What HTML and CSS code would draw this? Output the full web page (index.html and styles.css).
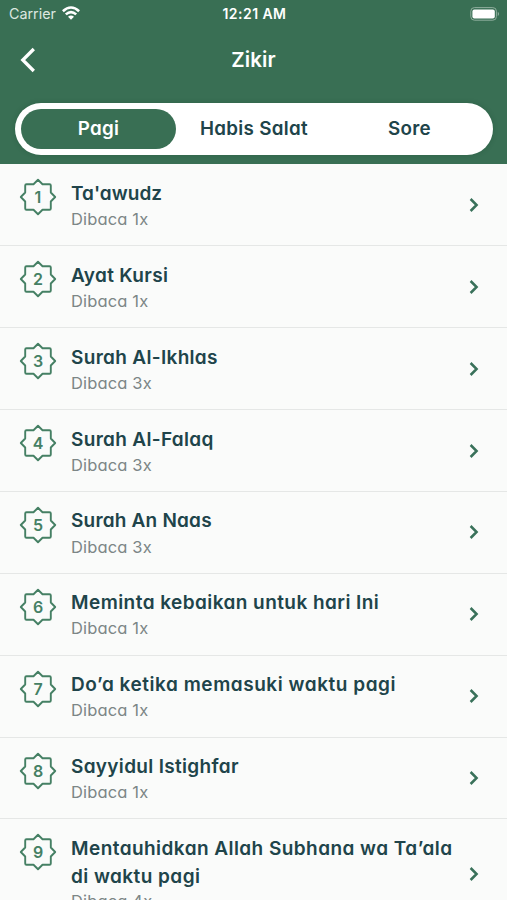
FILE: index.html
```html
<!DOCTYPE html>
<html lang="id">
<head>
<meta charset="utf-8">
<meta name="viewport" content="width=device-width">
<title>Zikir</title>
<link rel="stylesheet" href="styles.css">
</head>
<body>
<svg width="0" height="0" class="defs">
  <symbol id="star" viewBox="0 0 38 38"><path d="M19 1.8 L23.5 6.2 H30.5 Q31.8 6.2 31.8 7.5 V14.5 L36.2 19 L31.8 23.5 V30.5 Q31.8 31.8 30.5 31.8 H23.5 L19 36.2 L14.5 31.8 H7.5 Q6.2 31.8 6.2 30.5 V23.5 L1.8 19 L6.2 14.5 V7.5 Q6.2 6.2 7.5 6.2 H14.5 Z" fill="none" stroke="#458064" stroke-width="1.9" stroke-linejoin="round"/></symbol>
  <symbol id="chevron" viewBox="0 0 10 16"><path d="M1.6 2 L7.6 8 L1.6 14" fill="none" stroke="#39715a" stroke-width="2.5"/></symbol>
</svg>
<header class="header">
  <div class="status">
    <div class="carrier"><span>Carrier</span>
      <svg class="wifi" width="18" height="14" viewBox="0 0 18 14" fill="none" stroke="#fff" stroke-width="2.6"><path d="M.9 5.2 Q9 -2.2 17.1 5.2"/><path d="M3.8 8.4 Q9 3.8 14.2 8.4"/><path d="M9 13.8 L6 10.7 Q9 8.3 12 10.7 Z" fill="#fff" stroke="none"/></svg>
    </div>
    <span class="time">12:21 AM</span>
    <svg class="battery" width="30" height="14" viewBox="0 0 30 14"><rect x=".8" y=".6" width="25.6" height="12.6" rx="3.6" fill="none" stroke="#8fae9d" stroke-width="1"/><rect x="2.4" y="2.4" width="22.4" height="9" rx="2" fill="#fff"/><path d="M27.8 4.8 Q30 7 27.8 9.2Z" fill="#9db9aa"/></svg>
  </div>
  <div class="nav">
    <svg class="back" width="18" height="26" viewBox="0 0 18 26"><path d="M14.8 2 L3.8 13 L14.8 24" fill="none" stroke="#fff" stroke-width="3.3"/></svg>
    <h1>Zikir</h1>
  </div>
  <div class="tabs">
    <div class="tab active">Pagi</div><div class="tab">Habis Salat</div><div class="tab">Sore</div>
  </div>
</header>
<main class="list">
  <article class="row"><div class="badge"><svg><use href="#star"/></svg><b>1</b></div><div class="info"><h2 class="snug">Ta'awudz</h2><p>Dibaca 1x</p></div><svg class="go"><use href="#chevron"/></svg></article>
  <article class="row"><div class="badge"><svg><use href="#star"/></svg><b>2</b></div><div class="info"><h2>Ayat Kursi</h2><p>Dibaca 1x</p></div><svg class="go"><use href="#chevron"/></svg></article>
  <article class="row"><div class="badge"><svg><use href="#star"/></svg><b>3</b></div><div class="info"><h2>Surah Al-Ikhlas</h2><p>Dibaca 3x</p></div><svg class="go"><use href="#chevron"/></svg></article>
  <article class="row"><div class="badge"><svg><use href="#star"/></svg><b>4</b></div><div class="info"><h2>Surah Al-Falaq</h2><p>Dibaca 3x</p></div><svg class="go"><use href="#chevron"/></svg></article>
  <article class="row"><div class="badge"><svg><use href="#star"/></svg><b>5</b></div><div class="info"><h2 class="close">Surah An Naas</h2><p>Dibaca 3x</p></div><svg class="go"><use href="#chevron"/></svg></article>
  <article class="row"><div class="badge"><svg><use href="#star"/></svg><b>6</b></div><div class="info"><h2 class="wide">Meminta kebaikan untuk hari Ini</h2><p>Dibaca 1x</p></div><svg class="go"><use href="#chevron"/></svg></article>
  <article class="row"><div class="badge"><svg><use href="#star"/></svg><b>7</b></div><div class="info"><h2 class="wider">Do’a ketika memasuki waktu pagi</h2><p>Dibaca 1x</p></div><svg class="go"><use href="#chevron"/></svg></article>
  <article class="row"><div class="badge"><svg><use href="#star"/></svg><b>8</b></div><div class="info"><h2>Sayyidul Istighfar</h2><p>Dibaca 1x</p></div><svg class="go"><use href="#chevron"/></svg></article>
  <article class="row tall"><div class="badge"><svg><use href="#star"/></svg><b>9</b></div><div class="info"><h2 class="wide">Mentauhidkan Allah Subhana wa Ta’ala<br>di waktu pagi</h2><p>Dibaca 4x</p></div><svg class="go"><use href="#chevron"/></svg></article>
</main>
</body>
</html>
```

FILE: styles.css
```css
* { box-sizing: border-box; margin: 0; padding: 0; }
body { height: 900px; overflow: hidden; background: #fafbfa; font-family: Inter, "Liberation Sans", sans-serif; font-feature-settings: "cv11"; color: #20444a; }
.defs { position: absolute; }
.header { height: 164.4px; background: #396f54; color: #fff; }
.status { height: 28px; display: grid; grid-template-columns: 1fr auto 1fr; align-items: center; padding: 0 7px 0 9px; font-size: 14.3px; font-feature-settings: normal; }
.carrier { display: flex; align-items: center; gap: 6px; color: #dce7e0; margin-top: -1px; }
.wifi { margin-top: -2px; }
.time { font-weight: 600; font-size: 14px; letter-spacing: .45px; margin-top: -1px; }
.battery { justify-self: end; margin-top: -1px; }
.nav { height: 64px; display: grid; grid-template-columns: 1fr auto 1fr; align-items: center; padding: 0 19px; }
.nav h1 { font-size: 20.5px; font-weight: 600; letter-spacing: .1px; margin-top: -2px; }
.tabs { display: grid; grid-template-columns: 155px 156px 1fr; height: 52px; margin: 11px 14px 0 15px; padding: 6px; border-radius: 26px; background: #fff; box-shadow: 0 0 5px rgba(20,60,35,.25); color: #20444a; font-size: 18.8px; font-weight: 600; letter-spacing: .3px; }
.tab { display: flex; align-items: center; justify-content: center; padding-bottom: 2px; border-radius: 20px; }
.tab.active { background: #396f54; color: #fff; }
.row { display: flex; align-items: flex-start; height: 81.88px; padding: 14px 28px 0 19px; border-bottom: 1px solid #e5e7e6; }
.row.tall { height: 112px; }
.badge { width: 38px; height: 38px; display: grid; flex: none; }
.badge svg, .badge b { grid-area: 1 / 1; width: 38px; height: 38px; }
.badge b { display: grid; place-items: center; color: #458064; font-size: 16px; font-weight: 600; }
.info { flex: 1; margin: 1.5px 0 0 14px; }
h2 { font-size: 19px; line-height: 28px; font-weight: 600; letter-spacing: .32px; white-space: nowrap; }
.snug { letter-spacing: .03px; }
.close { letter-spacing: .2px; }
.wide { letter-spacing: .44px; }
.wider { letter-spacing: .54px; }
p { margin-top: -.9px; font-size: 16.5px; line-height: 25px; letter-spacing: .15px; color: #7c8686; }
.go { width: 10px; height: 16px; margin-top: 18.5px; flex: none; }
.tall .go { margin-top: 33px; }
.tall p { margin-top: -1.6px; }
```
